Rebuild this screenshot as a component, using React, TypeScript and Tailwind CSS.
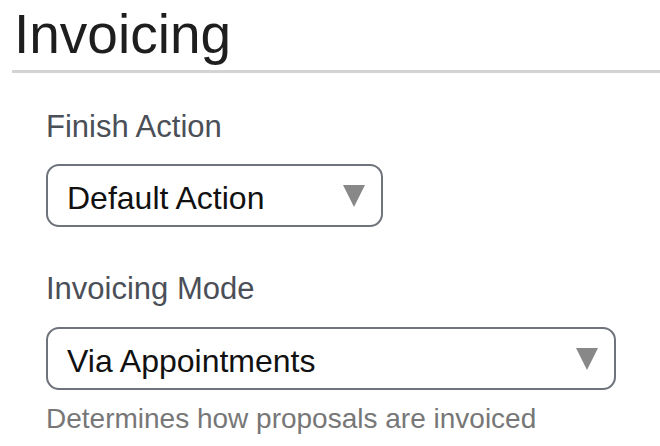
import React from 'react';

function Caret() {
    return (
        <svg width="22" height="22" viewBox="0 0 22 22" className="shrink-0">
            <path d="M0 0H22L11 22Z" fill="#888888" />
        </svg>
    );
}

function SelectBox({ value, width }: { value: string; width: string }) {
    return (
        <div className={`${width} h-[63px] flex items-center justify-between border-2 border-[#6f737b] rounded-[13px] pl-[19px] pr-4 bg-white`}>
            <span className="text-[32px] leading-[32px] pt-[5px] text-[#111111]">{value}</span>
            <Caret />
        </div>
    );
}

export default function App() {
    return (
        <div className="w-[660px] h-[446px] overflow-hidden bg-white pl-3 pt-[6px] font-['Liberation_Sans',Arial,sans-serif]">
            <h1 className="text-[55px] leading-[56px] text-[#1e1e1e] pl-[2px]">Invoicing</h1>
            <div className="mt-2 h-[3px] bg-[#d3d3d3]" />

            <div className="pl-[34px]">
                <label className="block mt-[38px] text-[31px] leading-[31px] text-[#4b4f57]">Finish Action</label>
                <div className="mt-[22px]">
                    <SelectBox value="Default Action" width="w-[337px]" />
                </div>

                <label className="block mt-[46px] text-[31px] leading-[31px] text-[#4b4f57]">Invoicing Mode</label>
                <div className="mt-[23px]">
                    <SelectBox value="Via Appointments" width="w-[570px]" />
                </div>
                <p className="mt-[15px] text-[28px] leading-[28px] text-[#777777]">Determines how proposals are invoiced</p>
            </div>
        </div>
    );
}
